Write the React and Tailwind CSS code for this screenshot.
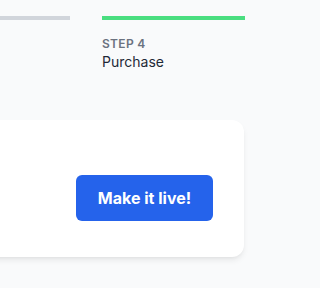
export default function App() {
  const steps = [
    { n: 3, label: 'Review', done: false },
    { n: 4, label: 'Purchase', done: true },
  ]

  return (
    <div
      className="min-h-screen bg-[#f9fafb]"
      style={{ fontFamily: 'Inter, "Liberation Sans", sans-serif' }}
    >
      <div className="w-[288px] h-[288px] overflow-hidden">
        <div className="flex justify-end gap-8 pt-4 pr-[43px]">
          {steps.map((s) => (
            <div key={s.n} className="w-[143px] shrink-0">
              <div className={s.done ? 'h-1 bg-[#4ade80]' : 'h-1 bg-[#d1d5db]'} />
              {s.done && (
                <div className="pt-4">
                  <p className="text-xs font-semibold uppercase tracking-wide text-[#6b7280]">Step {s.n}</p>
                  <p className="text-sm text-[#1f2937]">{s.label}</p>
                </div>
              )}
            </div>
          ))}
        </div>

        <div className="mt-12 ml-[-40px] mr-[44px] h-[137px] rounded-xl bg-white shadow-[0_4px_6px_-1px_rgba(0,0,0,0.08),0_2px_4px_-2px_rgba(0,0,0,0.06)] flex justify-end pt-[55px] pr-[31px]">
          <button className="h-[46px] w-[137px] rounded-md bg-[#2563eb] text-base font-bold text-white">
            Make it live!
          </button>
        </div>
      </div>
    </div>
  )
}
